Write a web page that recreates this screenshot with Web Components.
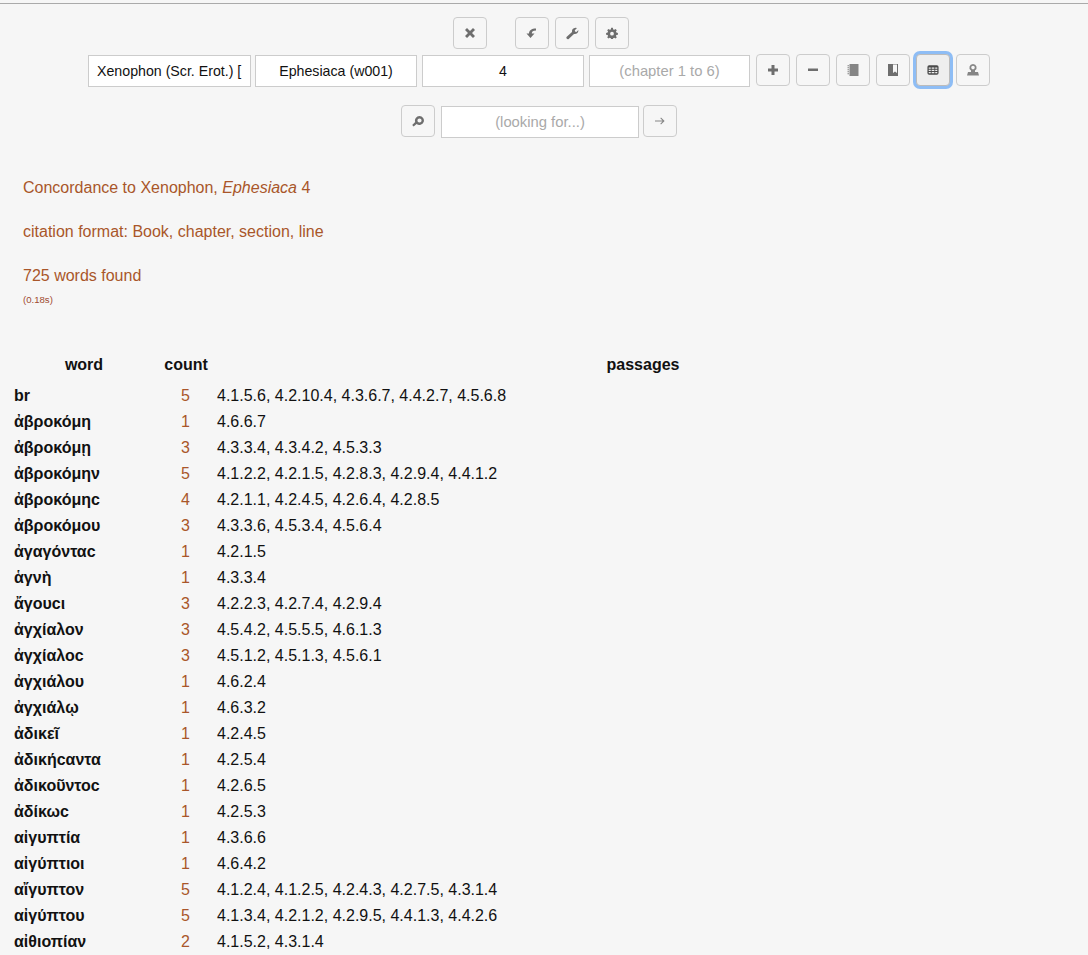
<!DOCTYPE html>
<html>
<head>
<meta charset="utf-8">
<style>
  html, body { margin: 0; background: #f6f6f6; }
  body { font-family: "Liberation Sans", Arial, sans-serif; }
</style>
</head>
<body>

<template id="tool-btn-template">
  <style>
    :host {
      display: flex;
      align-items: center;
      justify-content: center;
      box-sizing: border-box;
      width: 34px;
      height: 32px;
      border: 1px solid #ccc;
      border-radius: 4px;
      background: #f6f6f6;
      color: #6e6e6e;
    }
    :host([icon="notebook"]), :host([icon="stamp"]), :host([icon="arrow"]) { color: #858585; }
    :host([active]) {
      background: #eee;
      border-color: #bbb;
      box-shadow: 0 0 0 3px #8ebdf5;
      color: #4a4a4a;
    }
    svg { width: var(--icon-size, 14px); height: var(--icon-size, 14px); fill: currentColor; display: block; }
    :host([small]) { --icon-size: 12px; }
  </style>
  <svg viewBox="0 0 14 14"><path></path></svg>
</template>

<template id="text-box-template">
  <style>
    :host {
      display: block;
      box-sizing: border-box;
      height: 32px;
      border: 1px solid #ccc;
      background: #fff;
      padding: 0 8px;
      font-size: 14.2px;
      line-height: 31px;
      text-align: center;
      color: #111;
      white-space: nowrap;
      overflow: hidden;
    }
    :host([placeholder]) { color: #a9a9a9; font-size: 14.8px; }
    :host([left]) { text-align: left; }
  </style>
  <slot></slot>
</template>

<template id="top-bar-template">
  <style>
    :host {
      display: block;
      border-top: 1px solid #aaa;
      margin-top: 3px;
      padding-top: 13px;
    }
    .row { display: flex; justify-content: center; padding-right: 10px; }
    .r1 { gap: 6px; height: 32px; padding-right: 6px; }
    .r1 .gap { width: 16px; }
    .r2 { margin-top: 5px; }
    .r3 { margin-top: 18px; }
    .inputs { display: flex; margin: 1px 6px 0 0; }
    .btns { display: flex; gap: 6px; }
    text-box.w1 { width: 163px; margin-right: 4px; }
    text-box.w2 { width: 162px; margin-right: 5px; }
    text-box.w3 { width: 161px; }
    text-box.w4 { width: 198px; margin: 1px 4px 0 6px; }
  </style>
  <div class="row r1">
    <tool-btn icon="close"></tool-btn>
    <div class="gap"></div>
    <tool-btn icon="undo"></tool-btn>
    <tool-btn icon="wrench"></tool-btn>
    <tool-btn icon="gear" small></tool-btn>
  </div>
  <div class="row r2">
    <div class="inputs">
      <text-box class="w1" left>Xenophon (Scr. Erot.) [</text-box>
      <text-box class="w2">Ephesiaca (w001)</text-box>
      <text-box class="w2">4</text-box>
      <text-box class="w3" placeholder>(chapter 1 to 6)</text-box>
    </div>
    <div class="btns">
      <tool-btn icon="plus"></tool-btn>
      <tool-btn icon="minus"></tool-btn>
      <tool-btn icon="notebook"></tool-btn>
      <tool-btn icon="bookmark"></tool-btn>
      <tool-btn icon="table" active small></tool-btn>
      <tool-btn icon="stamp"></tool-btn>
    </div>
  </div>
  <div class="row r3">
    <tool-btn icon="search"></tool-btn>
    <text-box class="w4" placeholder>(looking for...)</text-box>
    <tool-btn icon="arrow"></tool-btn>
  </div>
</template>

<template id="result-head-template">
  <style>
    :host {
      display: block;
      padding: 40px 0 0 23px;
      color: #a9562a;
      font-size: 16px;
      line-height: 20px;
    }
    p { margin: 0 0 24px; }
    small { display: block; font-size: 9.6px; line-height: 12px; margin-top: -16px; color: #a04a30; }
  </style>
  <p>Concordance to Xenophon, <i>Ephesiaca</i> 4</p>
  <p>citation format: Book, chapter, section, line</p>
  <p>725 words found</p>
  <small>(0.18s)</small>
</template>

<template id="conc-table-template">
  <style>
    :host { display: block; margin-top: 48px; font-size: 16px; }
    .head {
      display: grid;
      grid-template-columns: 168px 36px 878px;
      height: 29px;
      font-weight: bold;
      line-height: 22px;
      color: #111;
      text-align: center;
    }
    .c { white-space: nowrap; display: flex; justify-content: center; }
  </style>
  <div class="head">
    <div>word</div>
    <div class="c">count</div>
    <div>passages</div>
  </div>
  <slot></slot>
</template>

<template id="conc-row-template">
  <style>
    :host {
      display: grid;
      grid-template-columns: 154px 36px 1fr;
      height: 26px;
      line-height: 26px;
      font-size: 16px;
      color: #111;
    }
    .w { font-weight: bold; padding-left: 14px; white-space: nowrap; }
    .n { text-align: right; color: #a9562a; }
    .p { padding-left: 27px; white-space: nowrap; }
  </style>
  <div class="w"></div>
  <div class="n"></div>
  <div class="p"></div>
</template>

<top-bar></top-bar>
<result-head></result-head>
<conc-table>
  <conc-row word="br" n="5" refs="4.1.5.6, 4.2.10.4, 4.3.6.7, 4.4.2.7, 4.5.6.8"></conc-row>
  <conc-row word="ἀβροκόμη" n="1" refs="4.6.6.7"></conc-row>
  <conc-row word="ἀβροκόμῃ" n="3" refs="4.3.3.4, 4.3.4.2, 4.5.3.3"></conc-row>
  <conc-row word="ἀβροκόμην" n="5" refs="4.1.2.2, 4.2.1.5, 4.2.8.3, 4.2.9.4, 4.4.1.2"></conc-row>
  <conc-row word="ἀβροκόμηϲ" n="4" refs="4.2.1.1, 4.2.4.5, 4.2.6.4, 4.2.8.5"></conc-row>
  <conc-row word="ἀβροκόμου" n="3" refs="4.3.3.6, 4.5.3.4, 4.5.6.4"></conc-row>
  <conc-row word="ἀγαγόνταϲ" n="1" refs="4.2.1.5"></conc-row>
  <conc-row word="ἁγνὴ" n="1" refs="4.3.3.4"></conc-row>
  <conc-row word="ἄγουϲι" n="3" refs="4.2.2.3, 4.2.7.4, 4.2.9.4"></conc-row>
  <conc-row word="ἀγχίαλον" n="3" refs="4.5.4.2, 4.5.5.5, 4.6.1.3"></conc-row>
  <conc-row word="ἀγχίαλοϲ" n="3" refs="4.5.1.2, 4.5.1.3, 4.5.6.1"></conc-row>
  <conc-row word="ἀγχιάλου" n="1" refs="4.6.2.4"></conc-row>
  <conc-row word="ἀγχιάλῳ" n="1" refs="4.6.3.2"></conc-row>
  <conc-row word="ἀδικεῖ" n="1" refs="4.2.4.5"></conc-row>
  <conc-row word="ἀδικήϲαντα" n="1" refs="4.2.5.4"></conc-row>
  <conc-row word="ἀδικοῦντοϲ" n="1" refs="4.2.6.5"></conc-row>
  <conc-row word="ἀδίκωϲ" n="1" refs="4.2.5.3"></conc-row>
  <conc-row word="αἰγυπτία" n="1" refs="4.3.6.6"></conc-row>
  <conc-row word="αἰγύπτιοι" n="1" refs="4.6.4.2"></conc-row>
  <conc-row word="αἴγυπτον" n="5" refs="4.1.2.4, 4.1.2.5, 4.2.4.3, 4.2.7.5, 4.3.1.4"></conc-row>
  <conc-row word="αἰγύπτου" n="5" refs="4.1.3.4, 4.2.1.2, 4.2.9.5, 4.4.1.3, 4.4.2.6"></conc-row>
  <conc-row word="αἰθιοπίαν" n="2" refs="4.1.5.2, 4.3.1.4"></conc-row>
</conc-table>

<script>
  const icons = {
    close: 'M2 4 4 2 7 5 10 2 12 4 9 7 12 10 10 12 7 9 4 12 2 10 5 7Z',
    undo: 'M1.5 7.5H4C4 4.5 6.5 2.5 11 2.5V4.5C8 4.5 6.8 5.8 6.8 7.5H9.5L5.5 12Z',
    wrench: 'M1.5 11 7 6C6.6 4 8 1.8 10.6 1.8L12 2 9.8 4.2 10 5.6 11.4 6 13.4 4C13.6 6.8 11.4 8.4 9 8L3.4 13.2C2.4 13.8.8 12.2 1.5 11Z',
    gear: 'M6 1H8L8.4 2.8 9.6 3.3 11.2 2.3 12.6 3.7 11.6 5.3 12.1 6.5 13.9 6.9V8.9L12.1 9.3 11.6 10.5 12.6 12.1 11.2 13.5 9.6 12.5 8.4 13 8 14H6L5.6 13 4.4 12.5 2.8 13.5 1.4 12.1 2.4 10.5 1.9 9.3.1 8.9V6.9L1.9 6.5 2.4 5.3 1.4 3.7 2.8 2.3 4.4 3.3 5.6 2.8ZM7 5.6A2.2 2.2 0 1 0 7 10 2.2 2.2 0 1 0 7 5.6Z',
    plus: 'M5.5 2H8.5V5.5H12V8.5H8.5V12H5.5V8.5H2V5.5H5.5Z',
    minus: 'M2 5.5H12V8H2Z',
    notebook: 'M3.5 1H12.5V13H3.5ZM1.5 2.2H3V3.2H1.5ZM1.5 4.2H3V5.2H1.5ZM1.5 6.2H3V7.2H1.5ZM1.5 8.2H3V9.2H1.5ZM1.5 10.2H3V11.2H1.5Z',
    bookmark: 'M2 1H12V13H2ZM7 1.6V10L9 8.4 11 10V1.6Z',
    table: 'M2.5 1.5H11.5Q13.5 1.5 13.5 3.5V10.5Q13.5 12.5 11.5 12.5H2.5Q.5 12.5.5 10.5V3.5Q.5 1.5 2.5 1.5ZM2 4V5.6H4.4V4ZM5.4 4V5.6H8.6V4ZM9.6 4V5.6H12V4ZM2 6.6V8.2H4.4V6.6ZM5.4 6.6V8.2H8.6V6.6ZM9.6 6.6V8.2H12V6.6ZM2 9.2V10.8H4.4V9.2ZM5.4 9.2V10.8H8.6V9.2ZM9.6 9.2V10.8H12V9.2Z',
    stamp: 'M7 1A3.6 3.6 0 0 1 9 7.6V9H12L13 12.5H1L2 9H5V7.6A3.6 3.6 0 0 1 7 1ZM7 2.8A1.8 1.8 0 1 0 7 6.4 1.8 1.8 0 1 0 7 2.8Z',
    search: 'M8.5 2A4.5 4.5 0 1 1 5.6 10L2.6 12.5 1.2 11 4.2 8A4.5 4.5 0 0 1 8.5 2ZM8.5 4.4A2.1 2.1 0 1 0 8.5 8.6 2.1 2.1 0 1 0 8.5 4.4Z',
    arrow: 'M2 6.5H9.5L7.3 4.3 8 3.6 11.6 7 8 10.4 7.3 9.7 9.5 7.5H2Z'
  };

  // shadow root from a template
  function stamp(el, id) {
    el.attachShadow({ mode: 'open' });
    el.shadowRoot.appendChild(document.importNode(document.getElementById(id).content, true));
  }

  class ToolBtn extends HTMLElement {
    constructor() {
      super();
      stamp(this, 'tool-btn-template');
    }
    connectedCallback() {
      this.shadowRoot.querySelector('path').setAttribute('d', icons[this.getAttribute('icon')]);
    }
  }

  class TextBox extends HTMLElement {
    constructor() {
      super();
      stamp(this, 'text-box-template');
    }
  }

  class TopBar extends HTMLElement {
    constructor() {
      super();
      stamp(this, 'top-bar-template');
    }
  }

  class ResultHead extends HTMLElement {
    constructor() {
      super();
      stamp(this, 'result-head-template');
    }
  }

  class ConcTable extends HTMLElement {
    constructor() {
      super();
      stamp(this, 'conc-table-template');
    }
  }

  class ConcRow extends HTMLElement {
    constructor() {
      super();
      stamp(this, 'conc-row-template');
    }
    connectedCallback() {
      this.shadowRoot.querySelector('.w').textContent = this.getAttribute('word');
      this.shadowRoot.querySelector('.n').textContent = this.getAttribute('n');
      this.shadowRoot.querySelector('.p').textContent = this.getAttribute('refs');
    }
  }

  customElements.define('tool-btn', ToolBtn);
  customElements.define('text-box', TextBox);
  customElements.define('top-bar', TopBar);
  customElements.define('result-head', ResultHead);
  customElements.define('conc-table', ConcTable);
  customElements.define('conc-row', ConcRow);
</script>
</body>
</html>
